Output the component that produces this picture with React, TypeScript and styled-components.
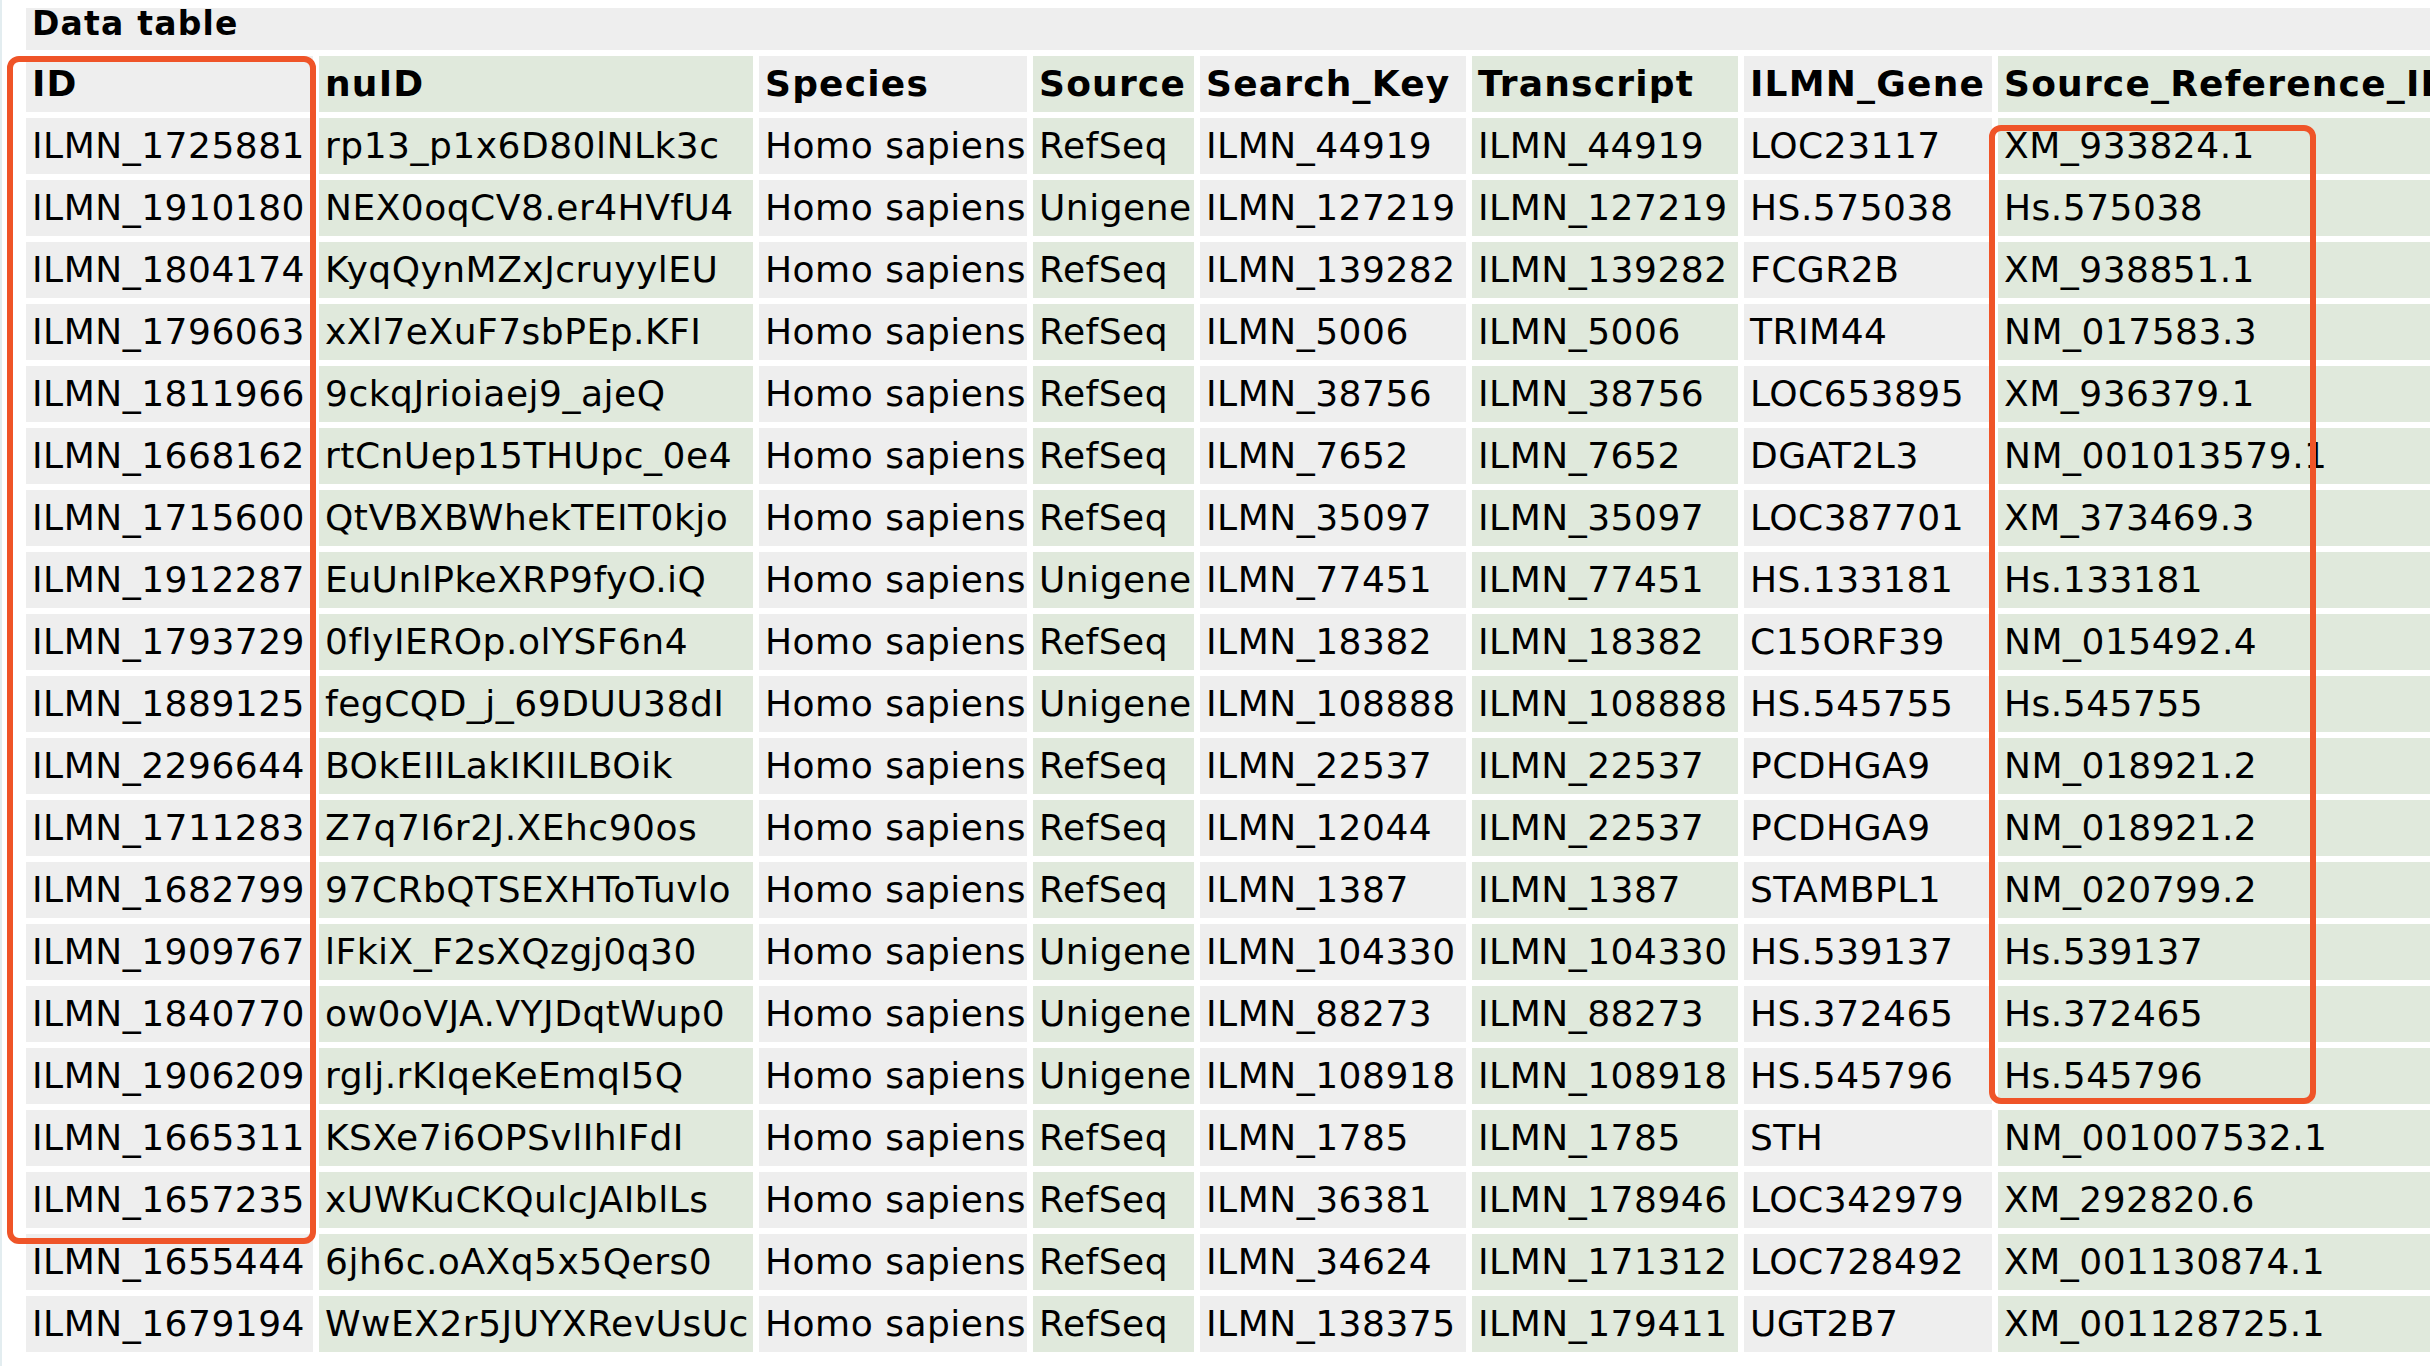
import React from "react";
import styled, { createGlobalStyle } from "styled-components";

const GlobalStyle = createGlobalStyle`
  html, body {
    margin: 0;
    padding: 0;
    background: #ffffff;
    overflow: hidden;
  }
  body {
    font-family: Verdana, "DejaVu Sans", sans-serif;
    color: #000000;
  }
`;

const Page = styled.div`
  box-sizing: border-box;
  width: 2430px;
  height: 1366px;
  overflow: hidden;
  border-left: 2px solid #e3edf0;
  padding: 8px 0 0 24px;
`;

const Grid = styled.div`
  position: relative;
  display: grid;
  grid-template-columns: 287px 434px 268px 161px 266px 266px 248px 640px;
  grid-template-rows: 42px;
  grid-auto-rows: 56px;
  gap: 6px;
  width: max-content;
`;

const Title = styled.div`
  grid-column: 1 / -1;
  box-sizing: border-box;
  background: #eeeeee;
  padding: 0 6px;
  font-weight: bold;
  font-size: 33px;
  line-height: 32px;
  letter-spacing: 1.2px;
`;

const Cell = styled.div<{ $tone: "grey" | "green"; $head?: boolean }>`
  background: ${(p) => (p.$tone === "grey" ? "#eeeeee" : "#e0e9dc")};
  box-sizing: border-box;
  padding: 7px 6px;
  font-size: 36px;
  line-height: 42px;
  white-space: nowrap;
  font-weight: ${(p) => (p.$head ? "bold" : "normal")};
  letter-spacing: ${(p) => (p.$head ? "1.2px" : "0.5px")};
`;

const Highlight = styled.div<{ $left: number; $top: number; $w: number; $h: number }>`
  position: absolute;
  box-sizing: border-box;
  left: ${(p) => p.$left}px;
  top: ${(p) => p.$top}px;
  width: ${(p) => p.$w}px;
  height: ${(p) => p.$h}px;
  border: 6px solid #ef5428;
  border-radius: 12px;
  pointer-events: none;
`;

const headers = [
  "ID",
  "nuID",
  "Species",
  "Source",
  "Search_Key",
  "Transcript",
  "ILMN_Gene",
  "Source_Reference_ID",
];

const rows: string[][] = [
  ["ILMN_1725881", "rp13_p1x6D80lNLk3c", "RefSeq", "ILMN_44919", "ILMN_44919", "LOC23117", "XM_933824.1"],
  ["ILMN_1910180", "NEX0oqCV8.er4HVfU4", "Unigene", "ILMN_127219", "ILMN_127219", "HS.575038", "Hs.575038"],
  ["ILMN_1804174", "KyqQynMZxJcruyylEU", "RefSeq", "ILMN_139282", "ILMN_139282", "FCGR2B", "XM_938851.1"],
  ["ILMN_1796063", "xXl7eXuF7sbPEp.KFI", "RefSeq", "ILMN_5006", "ILMN_5006", "TRIM44", "NM_017583.3"],
  ["ILMN_1811966", "9ckqJrioiaej9_ajeQ", "RefSeq", "ILMN_38756", "ILMN_38756", "LOC653895", "XM_936379.1"],
  ["ILMN_1668162", "rtCnUep15THUpc_0e4", "RefSeq", "ILMN_7652", "ILMN_7652", "DGAT2L3", "NM_001013579.1"],
  ["ILMN_1715600", "QtVBXBWhekTEIT0kjo", "RefSeq", "ILMN_35097", "ILMN_35097", "LOC387701", "XM_373469.3"],
  ["ILMN_1912287", "EuUnlPkeXRP9fyO.iQ", "Unigene", "ILMN_77451", "ILMN_77451", "HS.133181", "Hs.133181"],
  ["ILMN_1793729", "0flyIEROp.olYSF6n4", "RefSeq", "ILMN_18382", "ILMN_18382", "C15ORF39", "NM_015492.4"],
  ["ILMN_1889125", "fegCQD_j_69DUU38dI", "Unigene", "ILMN_108888", "ILMN_108888", "HS.545755", "Hs.545755"],
  ["ILMN_2296644", "BOkEIILakIKIILBOik", "RefSeq", "ILMN_22537", "ILMN_22537", "PCDHGA9", "NM_018921.2"],
  ["ILMN_1711283", "Z7q7I6r2J.XEhc90os", "RefSeq", "ILMN_12044", "ILMN_22537", "PCDHGA9", "NM_018921.2"],
  ["ILMN_1682799", "97CRbQTSEXHToTuvlo", "RefSeq", "ILMN_1387", "ILMN_1387", "STAMBPL1", "NM_020799.2"],
  ["ILMN_1909767", "lFkiX_F2sXQzgj0q30", "Unigene", "ILMN_104330", "ILMN_104330", "HS.539137", "Hs.539137"],
  ["ILMN_1840770", "ow0oVJA.VYJDqtWup0", "Unigene", "ILMN_88273", "ILMN_88273", "HS.372465", "Hs.372465"],
  ["ILMN_1906209", "rgIj.rKIqeKeEmqI5Q", "Unigene", "ILMN_108918", "ILMN_108918", "HS.545796", "Hs.545796"],
  ["ILMN_1665311", "KSXe7i6OPSvlIhIFdI", "RefSeq", "ILMN_1785", "ILMN_1785", "STH", "NM_001007532.1"],
  ["ILMN_1657235", "xUWKuCKQulcJAIblLs", "RefSeq", "ILMN_36381", "ILMN_178946", "LOC342979", "XM_292820.6"],
  ["ILMN_1655444", "6jh6c.oAXq5x5Qers0", "RefSeq", "ILMN_34624", "ILMN_171312", "LOC728492", "XM_001130874.1"],
  ["ILMN_1679194", "WwEX2r5JUYXRevUsUc", "RefSeq", "ILMN_138375", "ILMN_179411", "UGT2B7", "XM_001128725.1"],
];

const toneFor = (i: number): "grey" | "green" => (i % 2 === 0 ? "grey" : "green");

export default function App() {
  return (
    <>
      <GlobalStyle />
      <Page>
        <Grid>
          <Title>Data table</Title>
          {headers.map((h, i) => (
            <Cell key={`h-${i}`} $tone={toneFor(i)} $head>
              {h}
            </Cell>
          ))}
          {rows.map((r, ri) => {
            const full = [r[0], r[1], "Homo sapiens", ...r.slice(2)];
            return full.map((v, ci) => (
              <Cell key={`${ri}-${ci}`} $tone={toneFor(ci)}>
                {v}
              </Cell>
            ));
          })}
          <Highlight $left={-19} $top={48} $w={309} $h={1188} />
          <Highlight $left={1963} $top={117} $w={327} $h={979} />
        </Grid>
      </Page>
    </>
  );
}
